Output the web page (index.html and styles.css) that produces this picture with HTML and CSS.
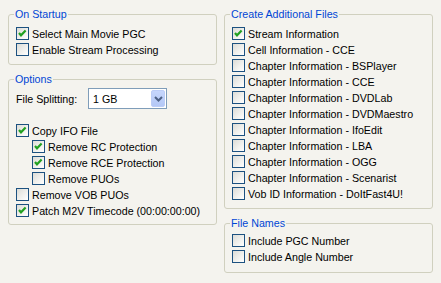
FILE: index.html
```html
<!DOCTYPE html>
<html lang="en">
<head>
    <meta charset="UTF-8">
    <title>Options</title>
    <link rel="stylesheet" href="styles.css">
</head>
<body>
    <div class="page">
        <div class="col">
            <fieldset class="group">
                <legend>On Startup</legend>
                <div class="check"><span class="box on"></span>Select Main Movie PGC</div>
                <div class="check"><span class="box"></span>Enable Stream Processing</div>
            </fieldset>

            <fieldset class="group options">
                <legend>Options</legend>
                <div class="split">
                    <span class="split-label">File Splitting:</span>
                    <div class="combo">
                        <span class="combo-text">1 GB</span>
                        <span class="combo-btn">
                            <svg width="9" height="6" viewBox="0 0 9 6"><path d="M1 1 L4.5 4.5 L8 1" fill="none" stroke="#4d6185" stroke-width="2"/></svg>
                        </span>
                    </div>
                </div>
                <div class="check first"><span class="box on"></span>Copy IFO File</div>
                <div class="check sub"><span class="box on"></span>Remove RC Protection</div>
                <div class="check sub"><span class="box on"></span>Remove RCE Protection</div>
                <div class="check sub"><span class="box"></span>Remove PUOs</div>
                <div class="check"><span class="box"></span>Remove VOB PUOs</div>
                <div class="check"><span class="box on"></span>Patch M2V Timecode (00:00:00:00)</div>
            </fieldset>
        </div>

        <div class="col">
            <fieldset class="group">
                <legend>Create Additional Files</legend>
                <div class="check"><span class="box on"></span>Stream Information</div>
                <div class="check"><span class="box"></span>Cell Information - CCE</div>
                <div class="check"><span class="box"></span>Chapter Information - BSPlayer</div>
                <div class="check"><span class="box"></span>Chapter Information - CCE</div>
                <div class="check"><span class="box"></span>Chapter Information - DVDLab</div>
                <div class="check"><span class="box"></span>Chapter Information - DVDMaestro</div>
                <div class="check"><span class="box"></span>Chapter Information - IfoEdit</div>
                <div class="check"><span class="box"></span>Chapter Information - LBA</div>
                <div class="check"><span class="box"></span>Chapter Information - OGG</div>
                <div class="check"><span class="box"></span>Chapter Information - Scenarist</div>
                <div class="check"><span class="box"></span>Vob ID Information - DoItFast4U!</div>
            </fieldset>

            <fieldset class="group names">
                <legend>File Names</legend>
                <div class="check"><span class="box"></span>Include PGC Number</div>
                <div class="check"><span class="box"></span>Include Angle Number</div>
            </fieldset>
        </div>
    </div>
</body>
</html>
```

FILE: styles.css
```css
body {
    margin: 0;
    background-color: #f4f3ee;
    font-family: "Liberation Sans", Arial, sans-serif;
    font-size: 10.7px;
    color: #000;
}

.page {
    display: flex;
    gap: 7px;
    padding: 8px 0 0 8px;
}

.col {
    width: 209px;
    display: flex;
    flex-direction: column;
    gap: 8px;
}

.group {
    margin: 0;
    padding: 5px 0 6px 7px;
    border: 1px solid #d0d0bf;
    border-radius: 3px;
    min-width: 0;
}

.group legend {
    color: #0046d5;
    padding: 0 1px;
    margin-left: -2px;
    line-height: 13px;
}

.options {
    padding-bottom: 5px;
}

.names {
    padding-top: 3px;
    padding-bottom: 7px;
}

.check {
    display: flex;
    align-items: center;
    height: 16px;
    white-space: nowrap;
}

.check.sub {
    padding-left: 16px;
}

.check.first {
    margin-top: 14px;
}

.box {
    box-sizing: border-box;
    width: 13px;
    height: 13px;
    margin: 1px 3px 2px 0;
    align-self: flex-start;
    border: 1px solid #1c5180;
    background: linear-gradient(135deg, #dcdcd7 0%, #f2f2ef 60%, #ffffff 100%);
    flex-shrink: 0;
}

.box.on {
    background-image: url("data:image/svg+xml,%3Csvg xmlns='http://www.w3.org/2000/svg' width='11' height='11' viewBox='0 0 11 11'%3E%3Cpath d='M2 5 L4 7.3 L8.6 2.6' fill='none' stroke='%2321a121' stroke-width='2.2'/%3E%3C/svg%3E"), linear-gradient(135deg, #dcdcd7 0%, #f2f2ef 60%, #ffffff 100%);
}

.split {
    display: flex;
    align-items: center;
    margin-top: -3px;
}

.split-label {
    width: 72px;
}

.combo {
    box-sizing: border-box;
    width: 79px;
    height: 21px;
    border: 1px solid #7f9db9;
    background-color: #fff;
    display: flex;
    align-items: center;
    justify-content: space-between;
    padding: 0 1px 0 4px;
}

.combo-btn {
    box-sizing: border-box;
    width: 14px;
    height: 17px;
    border-radius: 2px;
    border: 1px solid #bccdf7;
    background: linear-gradient(#c6d6fc, #b4c8f6);
    display: flex;
    align-items: center;
    justify-content: center;
}
```
